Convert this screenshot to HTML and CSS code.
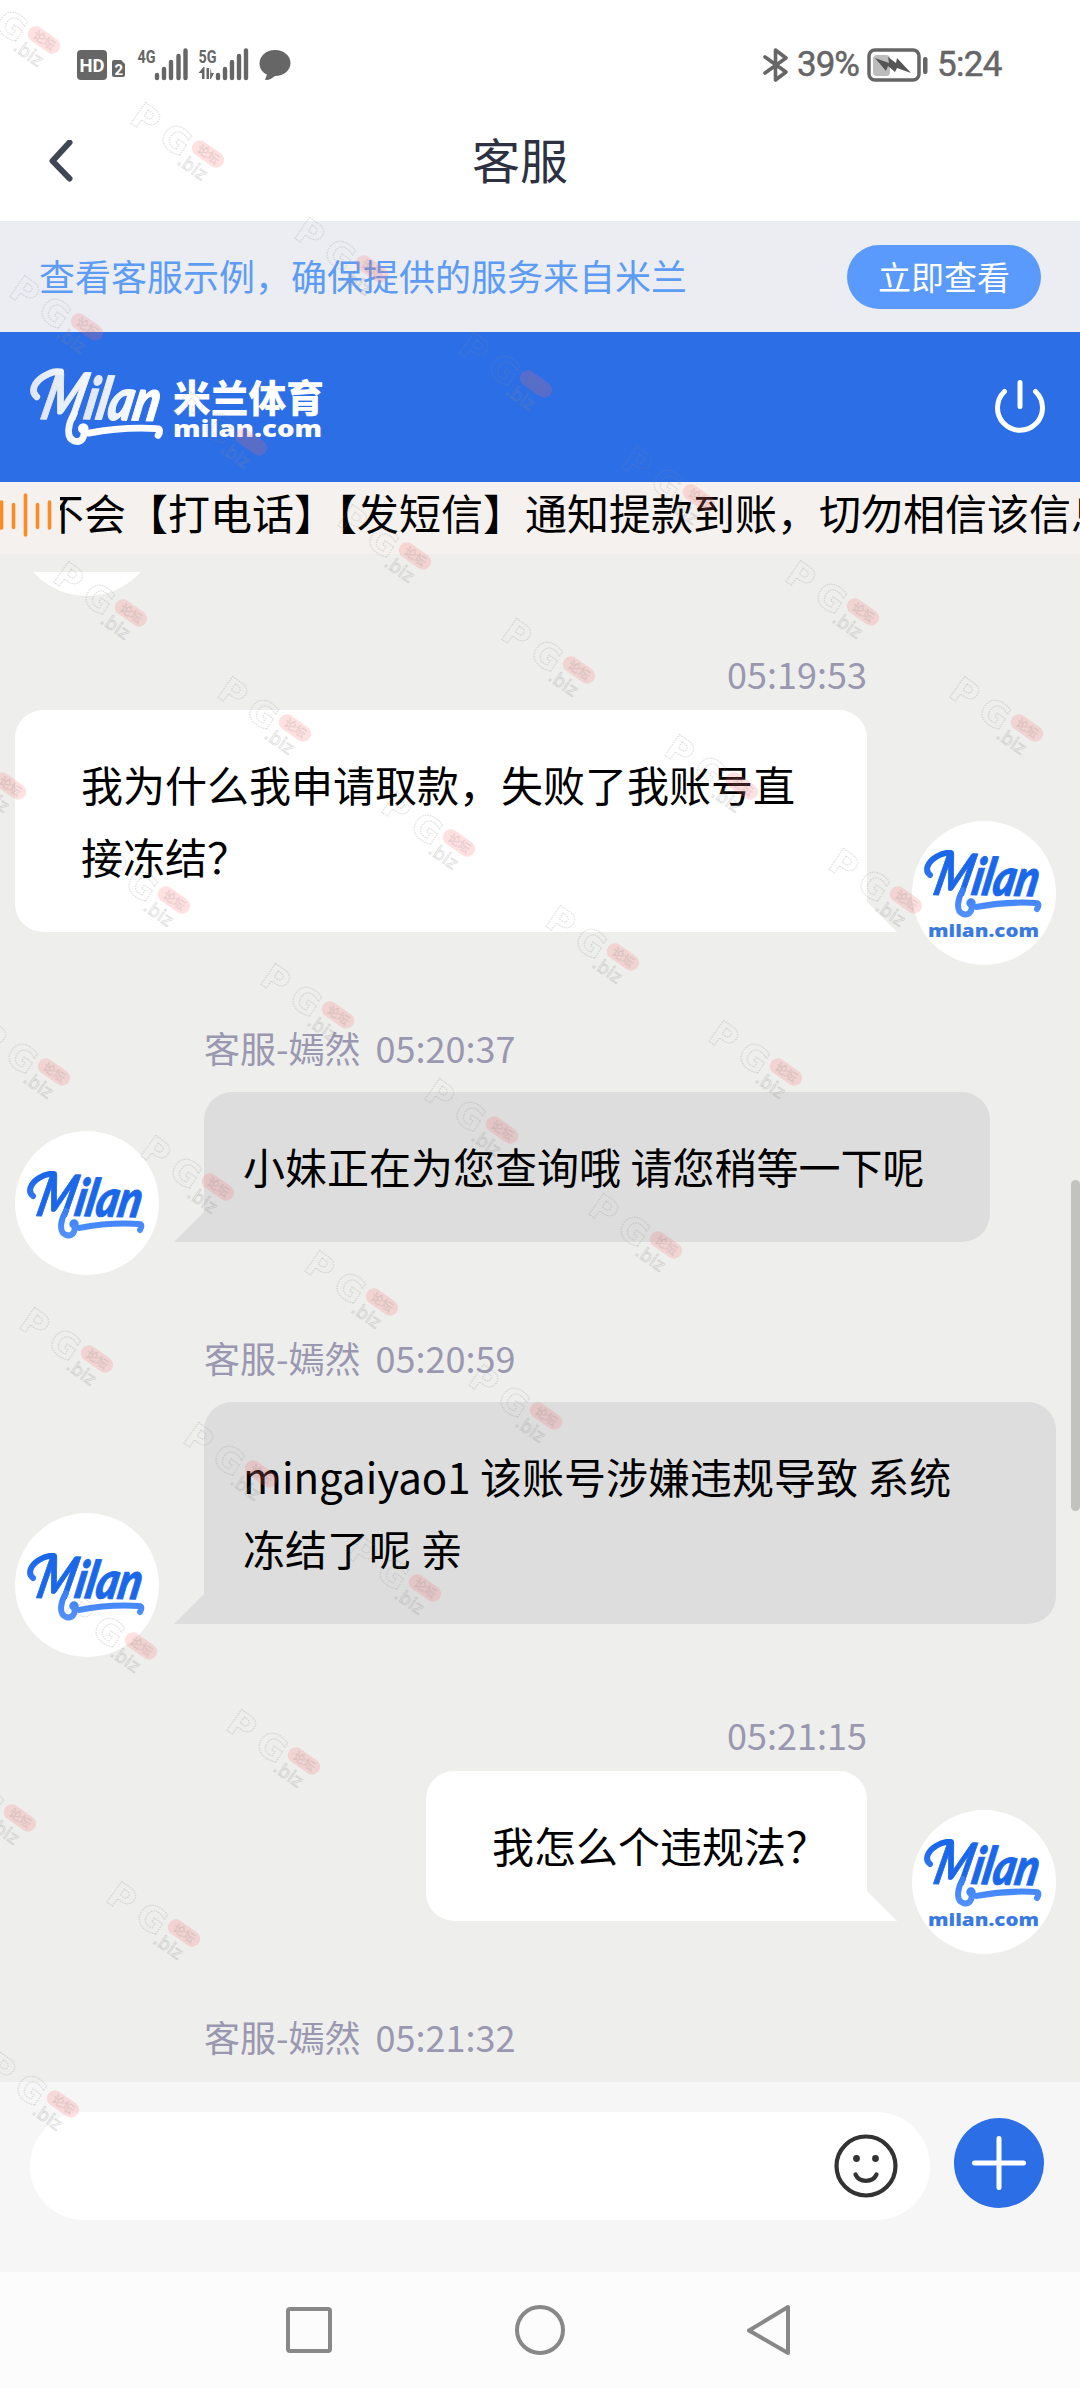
FILE: index.html
```html
<!DOCTYPE html>
<html lang="zh-CN">
<head>
<meta charset="utf-8">
<title>客服</title>
<link rel="stylesheet" href="styles.css">
</head>
<body>
<svg class="defs" aria-hidden="true">
  <defs>
    <linearGradient id="blue" x1="0" y1="0" x2="0" y2="68" gradientUnits="userSpaceOnUse">
      <stop offset="0.1" stop-color="#1b67ea"/><stop offset="1" stop-color="#5493ff"/>
    </linearGradient>
    <linearGradient id="white" x1="0" y1="0" x2="90" y2="0" gradientUnits="userSpaceOnUse">
      <stop offset="0" stop-color="#dfe6f3"/><stop offset="0.6" stop-color="#ffffff"/>
    </linearGradient>
    <symbol id="milan" viewBox="0 0 120 68" overflow="visible">
      <g transform="rotate(1.5 60 45)">
        <text class="script-m" transform="translate(8 46) skewX(-13)" textLength="36" lengthAdjust="spacingAndGlyphs">M</text>
        <text class="script-rest" transform="translate(46 45) skewX(-10)" textLength="66" lengthAdjust="spacingAndGlyphs">ilan</text>
      </g>
      <g class="swash">
        <path d="M6 25C0 20 4 12 12 7c5-3 9-5 15-4" stroke-width="6"/>
        <path d="M39 40C34 48 31 61 39 64c7 2 10-4 8-11" stroke-width="6"/>
        <circle cx="47" cy="53" r="3.2" stroke-width="3"/>
        <path d="M52 57c21-4 43-5 60-4 3 0 3 3 1 6" stroke-width="6"/>
      </g>
    </symbol>
    <g id="mark">
      <g transform="rotate(35)">
        <text class="mark-pg" x="-84" y="19">P</text>
        <text class="mark-pg" x="-49" y="19">G</text>
        <rect class="mark-pill" x="-18" y="-8" width="36" height="16" rx="8"/>
        <text class="mark-forum" x="-11.500" y="4.500">论坛</text>
        <text class="mark-biz" x="-21" y="26">.biz</text>
      </g>
    </g>
  </defs>
</svg>

<div class="screen">
  <div class="status">
    <svg class="status-left" width="240" height="36" viewBox="0 0 240 36">
      <rect x="0" y="2" width="30" height="30" rx="4"/>
      <text class="hd" x="2.5" y="23.500" textLength="25" lengthAdjust="spacingAndGlyphs">HD</text>
      <path d="M37 12h7l4 4v11a2 2 0 0 1-2 2h-9a2 2 0 0 1-2-2V14a2 2 0 0 1 2-2z"/>
      <text class="sim" x="37.500" y="26.500">2</text>
      <text class="net" x="60.500" y="14.500" textLength="18" lengthAdjust="spacingAndGlyphs">4G</text>
      <path class="bars" d="M80 27v3M87 21v9M94 14v16M101.500 8v22M108.500 2.500v27.500"/>
      <text class="net" x="121.500" y="14.500" textLength="18" lengthAdjust="spacingAndGlyphs">5G</text>
      <path class="bars" d="M141 27v3M148 21v9M155 14v16M162 8v22M169 2.500v27.500"/>
      <path d="M121.500 25l5-6h1v12h-2.500v-6zM129.500 20h2.500v11h-2.500zM133.500 20l1 5h2.500l-3 6h-1z"/>
      <path d="M198 2c9 0 15.500 6 15.500 13S207 28 198 28c-3 2.500-6.500 4.500-10 4l2-5.500c-4.500-2-7.500-6-7.500-11C182.500 8 189 2 198 2z"/>
    </svg>
    <div class="status-right">
      <svg width="26" height="34" viewBox="0 0 26 34"><path class="bt" d="M2 9l21 15-10.500 8V2L23 10 2 25"/></svg>
      <span class="pct">39%</span>
      <svg width="62" height="34" viewBox="0 0 62 34">
        <rect class="batt" x="2" y="2" width="50" height="30" rx="6"/>
        <rect x="6" y="7" width="17" height="21" rx="4" fill="#bdbdbd"/>
        <path d="M8 10l14 5-1-6 8 6 1-5 14 15-14-5-2 4-7-6-2 5z" fill="#555"/>
        <rect x="56" y="9" width="4.500" height="17" rx="2"/>
      </svg>
      <span class="clock">5:24</span>
    </div>
  </div>

  <header class="titlebar">
    <svg class="back" width="24" height="42" viewBox="0 0 24 42"><path d="M20.500 2.500L3.500 21l17 17.500"/></svg>
    <h1>客服</h1>
  </header>

  <div class="banner">
    <span>查看客服示例，确保提供的服务来自米兰</span>
    <button class="check">立即查看</button>
  </div>

  <div class="brandbar">
    <div class="brand">
      <svg class="brand-script" width="136" height="78"><use href="#milan"/></svg>
      <svg class="brand-name" width="154" height="74" viewBox="0 0 154 74">
        <text class="cn" x="1" y="42" textLength="151" lengthAdjust="spacingAndGlyphs">米兰体育</text>
        <text class="en" x="1" y="67" textLength="149" lengthAdjust="spacingAndGlyphs">milan.com</text>
      </svg>
    </div>
    <svg class="power" width="54" height="60" viewBox="0 0 54 60"><path d="M27 5.500v24M11.500 14.500A22.500 22.500 0 1 0 42.500 14.500"/></svg>
  </div>

  <div class="notice">
    <svg class="wave" width="60" height="72" viewBox="0 0 60 72"><path d="M1.500 20v26M13.500 22.500v23M25.500 13v40M37.500 22.500v23M49.500 20v26"/></svg>
    <div class="ticker"><span>不会【打电话】【发短信】通知提款到账，切勿相信该信息</span></div>
  </div>

  <main class="chat">
    <div class="cut-avatar"><div class="avatar"></div></div>

    <section class="msg mine">
      <div class="meta"><time>05:19:53</time></div>
      <div class="row">
        <div class="bubble">我为什么我申请取款，失败了我账号直接冻结？</div>
        <div class="avatar"><svg width="120" height="68"><use href="#milan"/></svg><svg class="domain" width="112" height="18"><text x="0" y="14.500" textLength="111" lengthAdjust="spacingAndGlyphs">milan.com</text></svg></div>
      </div>
    </section>

    <section class="msg agent">
      <div class="meta"><span>客服-嫣然</span><time>05:20:37</time></div>
      <div class="row">
        <div class="avatar"><svg width="120" height="68"><use href="#milan"/></svg></div>
        <div class="bubble">小妹正在为您查询哦 请您稍等一下呢</div>
      </div>
    </section>

    <section class="msg agent">
      <div class="meta"><span>客服-嫣然</span><time>05:20:59</time></div>
      <div class="row">
        <div class="avatar"><svg width="120" height="68"><use href="#milan"/></svg></div>
        <div class="bubble">mingaiyao1 该账号涉嫌违规导致 系统冻结了呢 亲</div>
      </div>
    </section>

    <section class="msg mine">
      <div class="meta"><time>05:21:15</time></div>
      <div class="row">
        <div class="bubble">我怎么个违规法？</div>
        <div class="avatar"><svg width="120" height="68"><use href="#milan"/></svg><svg class="domain" width="112" height="18"><text x="0" y="14.500" textLength="111" lengthAdjust="spacingAndGlyphs">milan.com</text></svg></div>
      </div>
    </section>

    <section class="msg agent">
      <div class="meta"><span>客服-嫣然</span><time>05:21:32</time></div>
    </section>
    <div class="scrollbar"></div>
  </main>

  <footer class="composer">
    <div class="field">
      <svg width="64" height="64" viewBox="0 0 64 64"><circle class="face" cx="32" cy="32" r="29.500"/><circle cx="22.500" cy="24.500" r="3.400"/><circle cx="41.500" cy="24.500" r="3.400"/><path class="face" d="M21.500 40.500c4 8.500 17 8.500 21 0"/></svg>
    </div>
    <button class="plus" aria-label="更多"><svg width="90" height="90" viewBox="0 0 90 90"><path d="M45 20.500v49M20.500 45h49"/></svg></button>
  </footer>

  <nav class="sysnav">
    <svg width="50" height="54" viewBox="0 0 50 54"><rect x="4" y="6" width="42" height="42" rx="2"/></svg>
    <svg width="54" height="54" viewBox="0 0 54 54"><circle cx="27" cy="27" r="23"/></svg>
    <svg width="50" height="54" viewBox="0 0 50 54"><path d="M42 4v46L3 27.500z"/></svg>
  </nav>

  <svg class="marks" width="1080" height="2388" viewBox="0 0 1080 2388" aria-hidden="true">
    <use href="#mark" x="44" y="40"/><use href="#mark" x="208" y="154"/><use href="#mark" x="372" y="269"/><use href="#mark" x="536" y="384"/><use href="#mark" x="699" y="498"/><use href="#mark" x="863" y="612"/><use href="#mark" x="1027" y="728"/>
    <use href="#mark" x="87" y="327"/><use href="#mark" x="251" y="442"/><use href="#mark" x="415" y="556"/><use href="#mark" x="579" y="670"/><use href="#mark" x="742" y="786"/><use href="#mark" x="906" y="900"/>
    <use href="#mark" x="131" y="613"/><use href="#mark" x="295" y="728"/><use href="#mark" x="459" y="843"/><use href="#mark" x="623" y="957"/><use href="#mark" x="786" y="1072"/>
    <use href="#mark" x="10" y="786"/><use href="#mark" x="174" y="900"/><use href="#mark" x="338" y="1015"/><use href="#mark" x="502" y="1130"/><use href="#mark" x="666" y="1245"/>
    <use href="#mark" x="54" y="1072"/><use href="#mark" x="218" y="1187"/><use href="#mark" x="382" y="1302"/><use href="#mark" x="546" y="1416"/>
    <use href="#mark" x="97" y="1359"/><use href="#mark" x="261" y="1474"/><use href="#mark" x="425" y="1588"/>
    <use href="#mark" x="141" y="1646"/><use href="#mark" x="304" y="1761"/>
    <use href="#mark" x="20" y="1818"/><use href="#mark" x="184" y="1933"/>
    <use href="#mark" x="63" y="2104"/>
  </svg>
</div>
</body>
</html>
```
FILE: styles.css
```css
* { box-sizing: border-box; }
body {
  margin: 0;
  font-family: "Noto Sans CJK SC", sans-serif;
  color: #000;
  background: #fff;
}
button { border: 0; padding: 0; font: inherit; }
svg { display: block; flex: none; }
.defs { position: absolute; width: 0; height: 0; }

.screen {
  position: relative;
  display: flex;
  flex-direction: column;
  width: 1080px;
  height: 2388px;
  overflow: hidden;
}

/* Status bar */
.status {
  display: flex;
  justify-content: space-between;
  height: 101px;
  padding: 48px 76px 0 77px;
  fill: #666;
}
.status-right { display: flex; align-items: center; height: 34px; color: #666; font: 400 35px/36px Roboto, sans-serif; -webkit-text-stroke: 0.5px #666; }
.pct { margin-left: 8px; width: 70px; letter-spacing: -1px; }
.clock { margin-left: 8px; width: 67px; letter-spacing: -0.700px; }
.bt { fill: none; stroke: #666; stroke-width: 3.600; stroke-linejoin: round; stroke-linecap: round; }
.batt { fill: none; stroke: #666; stroke-width: 3.500; }
.bars { stroke: #666; stroke-width: 4.400; stroke-linecap: round; }
.hd { font: 700 19px Roboto, sans-serif; fill: #fff; }
.sim { font: 700 15px Roboto, sans-serif; fill: #fff; }
.net { font: 700 19px Roboto, sans-serif; }

/* Page title */
.titlebar { display: flex; align-items: center; height: 120px; padding-left: 49px; }
.back path { fill: none; stroke: #3f4655; stroke-width: 6; stroke-linecap: round; stroke-linejoin: round; }
h1 { flex: 1; margin: 0 113px 6px 0; text-align: center; font-size: 48px; font-weight: 400; line-height: 70px; color: #2d3142; }

.banner {
  display: flex;
  align-items: center;
  justify-content: space-between;
  height: 111px;
  padding: 0 39px;
  background: #ebedf2;
  color: #5c9cf5;
  font-size: 36px;
}
.banner span { padding-bottom: 3px; }
.check { width: 194px; height: 64px; padding-bottom: 2px; border-radius: 32px; background: #5a9afc; color: #fff; font-size: 33px; line-height: 62px; }

.brandbar {
  display: flex;
  align-items: center;
  justify-content: space-between;
  height: 150px;
  padding: 0 33px 0 30px;
  background: #2c6ee6;
}
.brand { display: flex; align-items: center; gap: 6px; }
.brand-script { fill: url(#white); stroke: url(#white); color: #fff; }
.brand-name { fill: #fff; }
.cn { font-size: 38px; font-weight: 900; }
.en { font: 800 23px "Open Sans", sans-serif; }
.power path { fill: none; stroke: #fff; stroke-width: 5; stroke-linecap: round; }

.script-m, .script-rest { font-family: Lato, sans-serif; font-weight: 900; font-style: italic; stroke-width: 1; }
.script-m { font-size: 58px; }
.script-rest { font-size: 52px; }
.swash { fill: none; stroke-linecap: round; }

.notice { display: flex; height: 72px; background: #f5f1ee; }
.wave { stroke: #fb8b24; stroke-width: 3.600; stroke-linecap: round; }
.ticker { flex: 1; overflow: hidden; font-size: 42px; line-height: 60px; white-space: nowrap; }
.ticker span { margin-left: -18px; }

/* Conversation */
.chat { position: relative; height: 1528px; padding-top: 18px; background: #eeeeec; overflow: hidden; }
.cut-avatar { display: flex; align-items: flex-end; height: 24px; margin-left: 15px; overflow: hidden; }
.avatar {
  flex: none;
  display: flex;
  flex-direction: column;
  align-items: center;
  width: 144px;
  height: 144px;
  border-radius: 50%;
  background: #fff;
  fill: url(#blue);
  stroke: url(#blue);
}
.row .avatar { margin-bottom: -33px; padding-top: 29px; }
.agent .row .avatar { padding-top: 40px; }
.domain { margin-top: 4px; stroke: none; fill: #3b7ae0; }
.domain text { font: 800 18px "Open Sans", sans-serif; }

.meta { display: flex; gap: 15px; height: 60px; font-size: 36px; line-height: 60px; color: #9a97b0; }
.mine .meta { justify-content: flex-end; margin: 80px 213px 7px 0; }
.agent .meta { margin: 85px 0 15px 204px; }
.cut-avatar + .msg .meta { margin-top: 47px; }
.row { display: flex; align-items: flex-end; gap: 45px; padding: 0 24px 0 15px; }
.mine .row { justify-content: flex-end; }
.bubble {
  position: relative;
  padding: 38px 66px 40px 39px;
  border-radius: 28px 28px 28px 0;
  background: #ddd;
  font-size: 42px;
  line-height: 72px;
}
.mine .bubble { padding: 38px 39px 40px 66px; background: #fff; border-radius: 28px 28px 0 28px; }
.bubble::after {
  content: "";
  position: absolute;
  bottom: 0;
  left: -30px;
  width: 30px;
  height: 30px;
  background: inherit;
  clip-path: polygon(100% 0, 100% 100%, 0 100%);
}
.mine .bubble::after { left: 100%; clip-path: polygon(0 0, 100% 100%, 0 100%); }
.scrollbar { position: absolute; right: 0; top: 626px; width: 9px; height: 331px; border-radius: 5px; background: #c2c2c1; }

.composer { display: flex; gap: 24px; height: 190px; padding: 30px; background: #f6f6f6; }
.field { display: flex; align-items: center; justify-content: flex-end; width: 900px; height: 108px; padding-right: 32px; border-radius: 54px; background: #fff; }
.field svg { fill: #333; }
.field .face { fill: none; stroke: #333; stroke-width: 4.200; stroke-linecap: round; }
.plus { width: 90px; height: 90px; margin-top: 6px; border-radius: 50%; background: #2c6ee6; }
.plus path { stroke: #fff; stroke-width: 5; stroke-linecap: round; }

.sysnav { display: flex; justify-content: center; align-items: center; gap: 179px; height: 116px; background: #fcfcfc; fill: none; stroke: #888; stroke-width: 4; stroke-linejoin: round; }

/* Repeated forum watermark over the whole screen */
.marks { position: absolute; inset: 0; pointer-events: none; }
.mark-pg { font: 700 35px "DejaVu Sans", sans-serif; fill: none; stroke: #888; stroke-opacity: 0.26; stroke-width: 1.300; stroke-dasharray: 1.500 1; }
.mark-pill { fill: #ff6868; fill-opacity: 0.2; }
.mark-forum { font-size: 12px; fill: none; stroke: #777; stroke-opacity: 0.2; stroke-width: 0.600; }
.mark-biz { font: 18px "DejaVu Sans", sans-serif; fill: none; stroke: #888; stroke-opacity: 0.26; stroke-width: 0.900; }
```
